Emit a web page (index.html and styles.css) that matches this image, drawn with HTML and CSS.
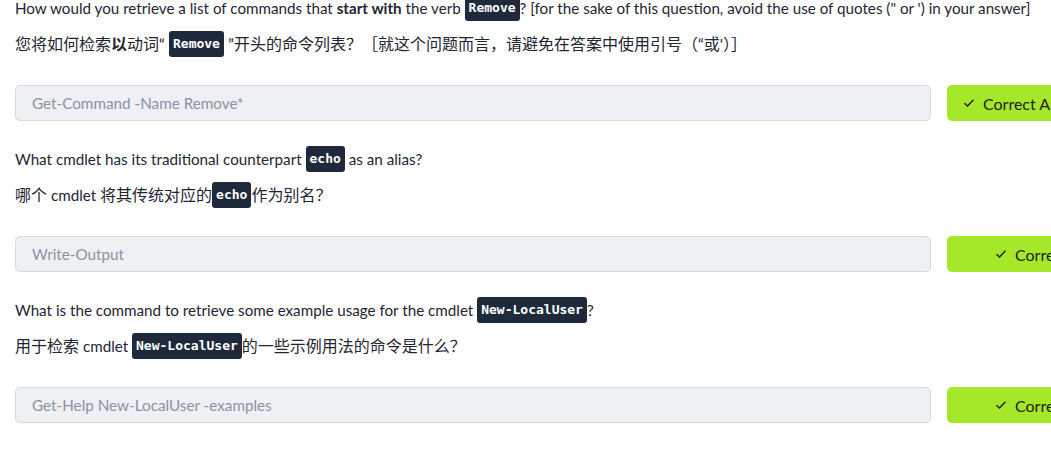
FILE: index.html
```html
<!DOCTYPE html>
<html lang="en">
<head>
<meta charset="utf-8">
<title>PowerShell quiz</title>
<link rel="stylesheet" href="styles.css">
</head>
<body>
<div class="quiz">
  <section class="question">
    <p class="q">How would you retrieve a list of commands that <b>start with</b> the verb <code class="kw">Remove</code>? [for the sake of this question, avoid the use of quotes (" or ') in your answer]</p>
    <p class="q zh">您将如何检索<b>以</b>动词“ <code class="kw">Remove</code> ”开头的命令列表？［就这个问题而言，请避免在答案中使用引号（“或'）］</p>
    <div class="answer-row">
      <input class="answer" type="text" placeholder="Get-Command -Name Remove*">
      <button class="reveal reveal-wide"><svg class="check" viewBox="0 0 12 10" width="12" height="10"><path d="M1.5 5.2 L4.5 8 L10.5 1.8" fill="none" stroke="#1c1f14" stroke-width="1.4"/></svg>Correct Answer</button>
    </div>
  </section>
  <section class="question">
    <p class="q">What cmdlet has its traditional counterpart <code class="kw">echo</code> as an alias?</p>
    <p class="q zh">哪个<span class="latin"> cmdlet </span>将其传统对应的<code class="kw">echo</code>作为别名？</p>
    <div class="answer-row">
      <input class="answer" type="text" placeholder="Write-Output">
      <button class="reveal reveal-narrow"><svg class="check" viewBox="0 0 12 10" width="12" height="10"><path d="M1.5 5.2 L4.5 8 L10.5 1.8" fill="none" stroke="#1c1f14" stroke-width="1.4"/></svg>Correct Answer</button>
    </div>
  </section>
  <section class="question">
    <p class="q">What is the command to retrieve some example usage for the cmdlet <code class="kw">New-LocalUser</code>?</p>
    <p class="q zh">用于检索<span class="latin"> cmdlet </span><code class="kw">New-LocalUser</code>的一些示例用法的命令是什么？</p>
    <div class="answer-row">
      <input class="answer" type="text" placeholder="Get-Help New-LocalUser -examples">
      <button class="reveal reveal-narrow"><svg class="check" viewBox="0 0 12 10" width="12" height="10"><path d="M1.5 5.2 L4.5 8 L10.5 1.8" fill="none" stroke="#1c1f14" stroke-width="1.4"/></svg>Correct Answer</button>
    </div>
  </section>
</div>
</body>
</html>
```
FILE: styles.css
```css
html, body {
  margin: 0;
  padding: 0;
  background: #ffffff;
  overflow: hidden;
}
body {
  font-family: "Lato", "Noto Sans CJK SC", sans-serif;
  font-size: 15.2px;
  color: #1f2533;
}
.quiz {
  margin-top: -5px;
  padding-left: 15px;
  width: 1200px;
  display: flex;
  flex-direction: column;
  gap: 25px;
}
.question {
  display: flex;
  flex-direction: column;
}
.q {
  margin: 0;
  line-height: 26px;
  white-space: nowrap;
}
.q + .q {
  margin-top: 10px;
}
.zh {
  font-size: 16px;
}
.zh .latin {
  font-size: 15.2px;
}
.q b {
  font-weight: 700;
}
.kw {
  display: inline-block;
  background: #1e293b;
  color: #ffffff;
  font-family: "DejaVu Sans Mono", monospace;
  font-weight: 700;
  font-size: 13px;
  line-height: 26px;
  padding: 0 4px;
  border-radius: 3px;
  vertical-align: top;
}
.answer-row {
  display: flex;
  gap: 16px;
  margin-top: 28px;
}
.answer {
  box-sizing: border-box;
  width: 916px;
  height: 36px;
  border: 1px solid #d6d9de;
  border-radius: 5px;
  background: #eef0f3;
  padding: 0 16px;
  font-family: "Lato", sans-serif;
  font-size: 15.25px;
  outline: none;
}
.answer::placeholder {
  color: #8a93a3;
}
.reveal {
  box-sizing: border-box;
  width: 220px;
  height: 36px;
  border: none;
  border-radius: 5px;
  background: #a5e82a;
  color: #1c1f14;
  font-family: "Lato", sans-serif;
  font-size: 16px;
  display: flex;
  align-items: center;
  gap: 8px;
}
.reveal-wide {
  padding-left: 16px;
}
.reveal-narrow {
  padding-left: 48px;
}
.check {
  flex: none;
}
```
